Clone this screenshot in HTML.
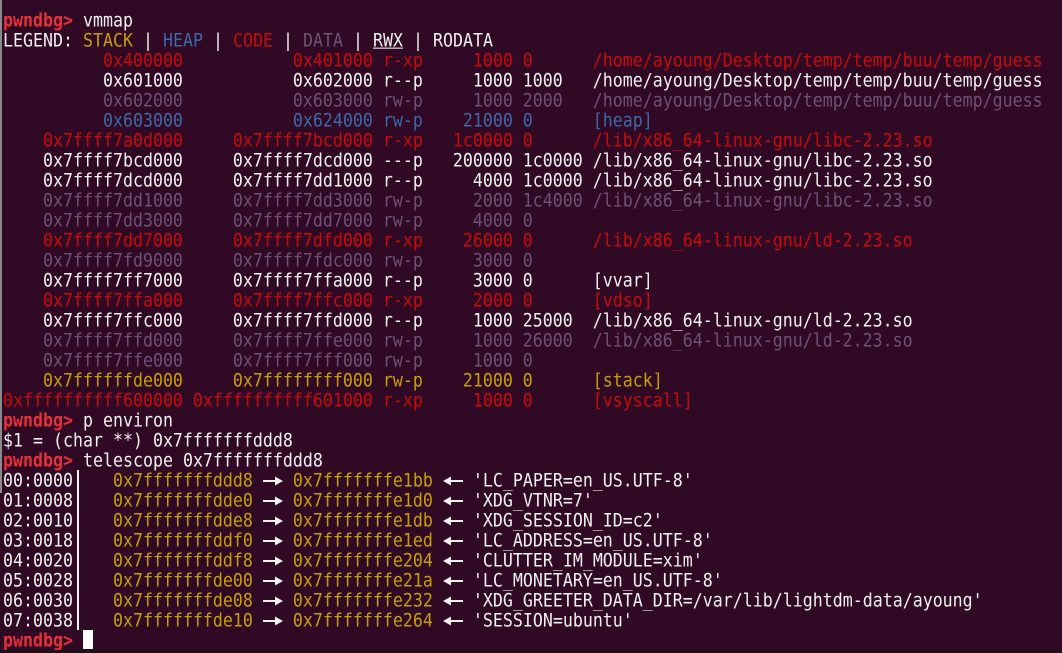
<!DOCTYPE html>
<html><head><meta charset="utf-8">
<style>
html,body{margin:0;padding:0;width:1062px;height:653px;overflow:hidden;background:#300a24}
#t{position:absolute;left:3px;top:11px;margin:0;font:16.6px/20px "DejaVu Sans Mono","Liberation Mono",monospace;color:#f0f0ee;letter-spacing:0.006px;white-space:pre;filter:blur(.3px)}
.l{display:block;height:20px;transform:scaleY(1.1);transform-origin:0 50%}
.p{color:#e8303a;font-weight:bold}
.r{color:#c80a0e}.d{color:#6f5076}.h{color:#3f68a6}.y{color:#c4a000}
.u{text-decoration:underline}
.a{position:absolute}
</style></head><body>
<pre id="t"><span class="l"><span class="p">pwndbg&gt;</span> vmmap</span><span class="l">LEGEND: <span class="y">STACK</span> | <span class="h">HEAP</span> | <span class="r">CODE</span> | <span class="d">DATA</span> | <span class="u">RWX</span> | RODATA</span><span class="l r">          0x400000           0x401000 r-xp     1000 0      /home/ayoung/Desktop/temp/temp/buu/temp/guess</span><span class="l">          0x601000           0x602000 r--p     1000 1000   /home/ayoung/Desktop/temp/temp/buu/temp/guess</span><span class="l d">          0x602000           0x603000 rw-p     1000 2000   /home/ayoung/Desktop/temp/temp/buu/temp/guess</span><span class="l h">          0x603000           0x624000 rw-p    21000 0      [heap]</span><span class="l r">    0x7ffff7a0d000     0x7ffff7bcd000 r-xp   1c0000 0      /lib/x86_64-linux-gnu/libc-2.23.so</span><span class="l">    0x7ffff7bcd000     0x7ffff7dcd000 ---p   200000 1c0000 /lib/x86_64-linux-gnu/libc-2.23.so</span><span class="l">    0x7ffff7dcd000     0x7ffff7dd1000 r--p     4000 1c0000 /lib/x86_64-linux-gnu/libc-2.23.so</span><span class="l d">    0x7ffff7dd1000     0x7ffff7dd3000 rw-p     2000 1c4000 /lib/x86_64-linux-gnu/libc-2.23.so</span><span class="l d">    0x7ffff7dd3000     0x7ffff7dd7000 rw-p     4000 0</span><span class="l r">    0x7ffff7dd7000     0x7ffff7dfd000 r-xp    26000 0      /lib/x86_64-linux-gnu/ld-2.23.so</span><span class="l d">    0x7ffff7fd9000     0x7ffff7fdc000 rw-p     3000 0</span><span class="l">    0x7ffff7ff7000     0x7ffff7ffa000 r--p     3000 0      [vvar]</span><span class="l r">    0x7ffff7ffa000     0x7ffff7ffc000 r-xp     2000 0      [vdso]</span><span class="l">    0x7ffff7ffc000     0x7ffff7ffd000 r--p     1000 25000  /lib/x86_64-linux-gnu/ld-2.23.so</span><span class="l d">    0x7ffff7ffd000     0x7ffff7ffe000 rw-p     1000 26000  /lib/x86_64-linux-gnu/ld-2.23.so</span><span class="l d">    0x7ffff7ffe000     0x7ffff7fff000 rw-p     1000 0</span><span class="l y">    0x7ffffffde000     0x7ffffffff000 rw-p    21000 0      [stack]</span><span class="l r">0xffffffffff600000 0xffffffffff601000 r-xp     1000 0      [vsyscall]</span><span class="l"><span class="p">pwndbg&gt;</span> p environ</span><span class="l">$1 = (char **) 0x7fffffffddd8</span><span class="l"><span class="p">pwndbg&gt;</span> telescope 0x7fffffffddd8</span><span class="l">00:0000    <span class="y">0x7fffffffddd8</span>    <span class="y">0x7fffffffe1bb</span>    'LC_PAPER=en_US.UTF-8'</span><span class="l">01:0008    <span class="y">0x7fffffffdde0</span>    <span class="y">0x7fffffffe1d0</span>    'XDG_VTNR=7'</span><span class="l">02:0010    <span class="y">0x7fffffffdde8</span>    <span class="y">0x7fffffffe1db</span>    'XDG_SESSION_ID=c2'</span><span class="l">03:0018    <span class="y">0x7fffffffddf0</span>    <span class="y">0x7fffffffe1ed</span>    'LC_ADDRESS=en_US.UTF-8'</span><span class="l">04:0020    <span class="y">0x7fffffffddf8</span>    <span class="y">0x7fffffffe204</span>    'CLUTTER_IM_MODULE=xim'</span><span class="l">05:0028    <span class="y">0x7fffffffde00</span>    <span class="y">0x7fffffffe21a</span>    'LC_MONETARY=en_US.UTF-8'</span><span class="l">06:0030    <span class="y">0x7fffffffde08</span>    <span class="y">0x7fffffffe232</span>    'XDG_GREETER_DATA_DIR=/var/lib/lightdm-data/ayoung'</span><span class="l">07:0038    <span class="y">0x7fffffffde10</span>    <span class="y">0x7fffffffe264</span>    'SESSION=ubuntu'</span><span class="l"><span class="p">pwndbg&gt;</span></span></pre>
<svg class="a" style="left:0;top:0" width="1062" height="653" viewBox="0 0 1062 653">
<rect x="0" y="0" width="2" height="493" fill="#8a8a8a"/>
<rect x="0" y="650" width="1062" height="3" fill="#1c1214"/>
<rect x="77" y="470" width="2" height="160" fill="#f0f0ee"/>
<rect x="83" y="630" width="10" height="19" fill="#fff"/>
<g fill="#f0f0ee">
<path d="M263 480h12v-3.500l8 4.500-8 4.500v-3.500h-12z"/><path d="M463 480h-12v-3.500l-8 4.500 8 4.500v-3.500h12z"/>
<path d="M263 500h12v-3.500l8 4.500-8 4.500v-3.500h-12z"/><path d="M463 500h-12v-3.500l-8 4.500 8 4.500v-3.500h12z"/>
<path d="M263 520h12v-3.500l8 4.500-8 4.500v-3.500h-12z"/><path d="M463 520h-12v-3.500l-8 4.500 8 4.500v-3.500h12z"/>
<path d="M263 540h12v-3.500l8 4.500-8 4.500v-3.500h-12z"/><path d="M463 540h-12v-3.500l-8 4.500 8 4.500v-3.500h12z"/>
<path d="M263 560h12v-3.500l8 4.500-8 4.500v-3.500h-12z"/><path d="M463 560h-12v-3.500l-8 4.500 8 4.500v-3.500h12z"/>
<path d="M263 580h12v-3.500l8 4.500-8 4.500v-3.500h-12z"/><path d="M463 580h-12v-3.500l-8 4.500 8 4.500v-3.500h12z"/>
<path d="M263 600h12v-3.500l8 4.500-8 4.500v-3.500h-12z"/><path d="M463 600h-12v-3.500l-8 4.500 8 4.500v-3.500h12z"/>
<path d="M263 620h12v-3.500l8 4.500-8 4.500v-3.500h-12z"/><path d="M463 620h-12v-3.500l-8 4.500 8 4.500v-3.500h12z"/>
</g>
</svg>
</body></html>
